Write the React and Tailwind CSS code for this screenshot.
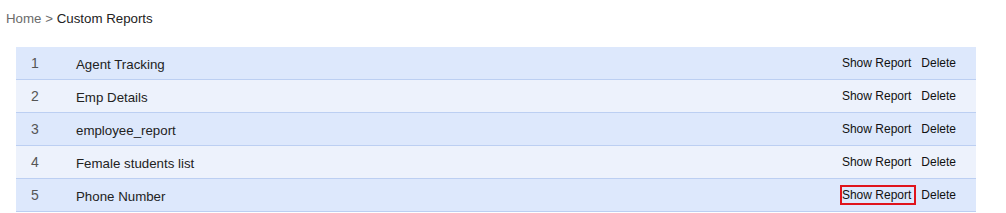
const reports = [
  { id: 1, name: 'Agent Tracking' },
  { id: 2, name: 'Emp Details' },
  { id: 3, name: 'employee_report' },
  { id: 4, name: 'Female students list' },
  { id: 5, name: 'Phone Number' },
];

export default function App() {
  return (
    <div className="w-[1006px] h-[213px] bg-white font-['Liberation_Sans',Arial,sans-serif]">
      {/* Breadcrumb */}
      <div className="pl-[6px] pt-[11px] h-[47px] text-[13.3px] leading-[16px]">
        <span className="text-[#6b6b6b]">Home</span>
        <span className="text-[#6b6b6b]"> &gt; </span>
        <span className="text-[#222]">Custom Reports</span>
      </div>

      {/* Reports table */}
      <div className="ml-[16px] w-[960px]">
        {reports.map((r, i) => (
          <div
            key={r.id}
            className={
              'flex items-center h-[33px] border-b border-[#bccff2] ' +
              (i % 2 === 0 ? 'bg-[#dde8fc]' : 'bg-[#edf2fc]')
            }
          >
            <div className="w-[60px] pl-[15px] pt-[1px] text-[14px] text-[#555]">{r.id}</div>
            <div className="flex-1 pt-[4px] text-[13.3px] text-[#222]">{r.name}</div>
            <div className="flex items-center pr-[20px] text-[12px] text-[#111]">
              <span
                className={
                  'border-2 pr-[3px] leading-[16px] ' +
                  (r.id === 5 ? 'border-[#e0141c]' : 'border-transparent')
                }
              >
                Show Report
              </span>
              <span className="ml-[5px]">Delete</span>
            </div>
          </div>
        ))}
      </div>
    </div>
  );
}
